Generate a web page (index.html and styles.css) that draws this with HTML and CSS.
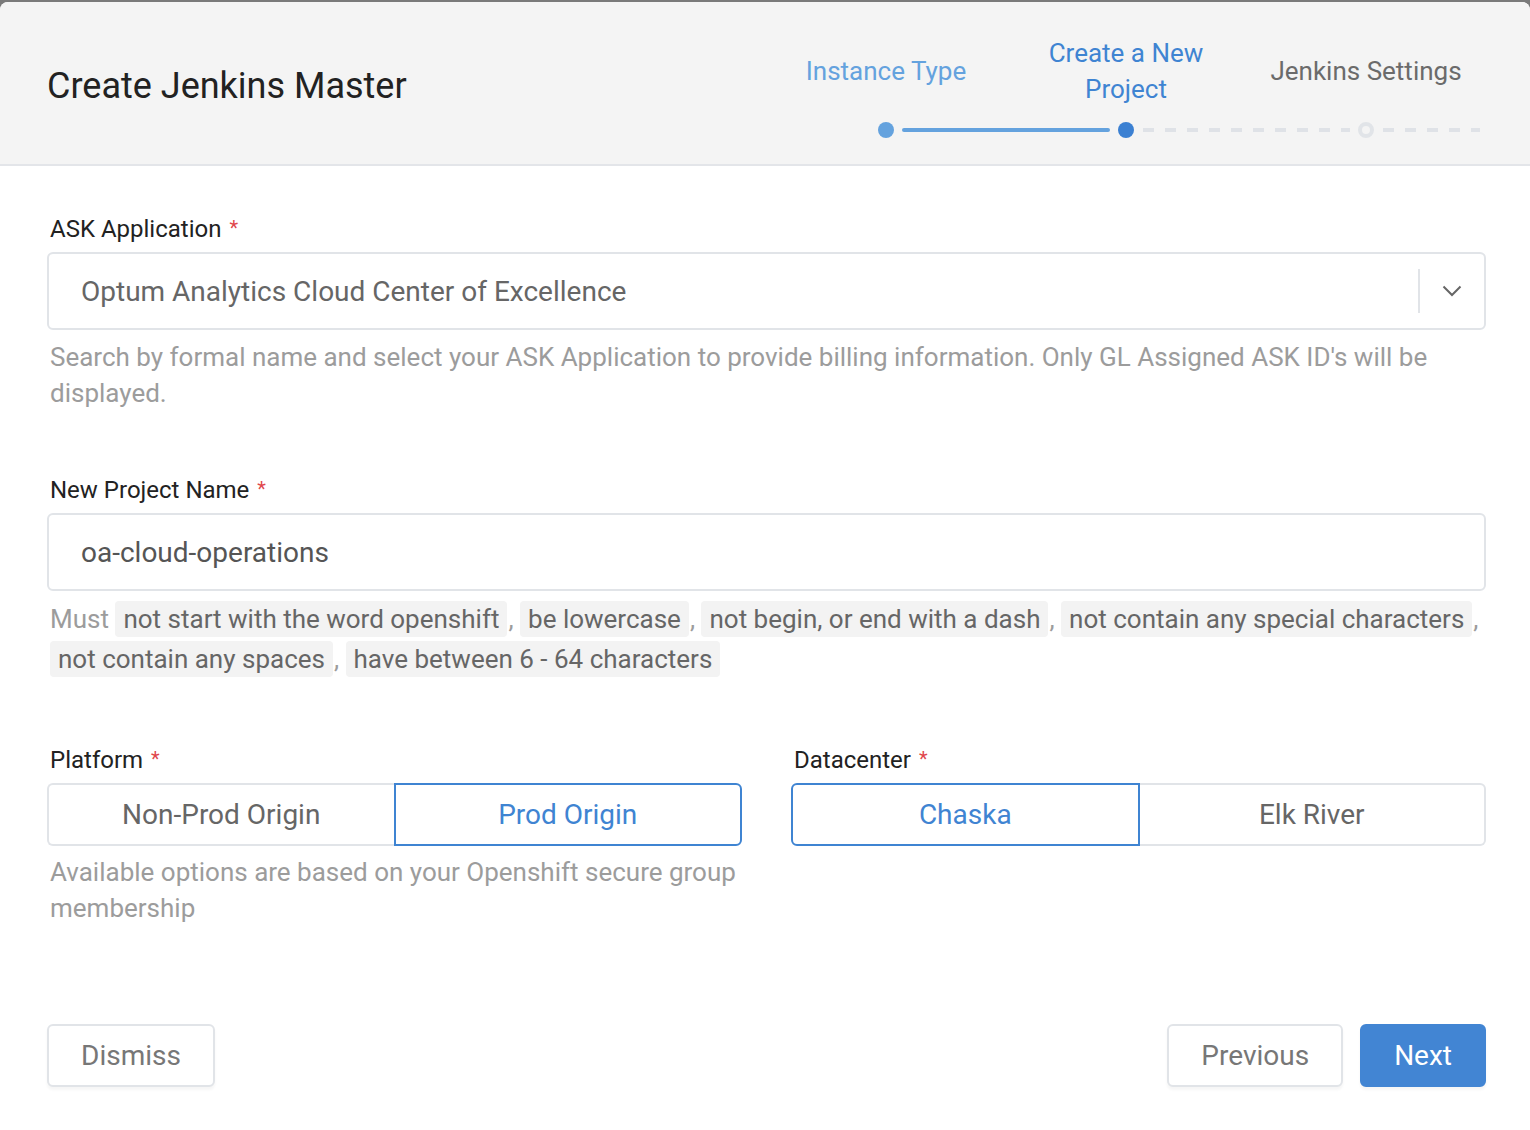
FILE: index.html
```html
<!DOCTYPE html>
<html lang="en">
<head>
<meta charset="utf-8">
<title>Create Jenkins Master</title>
<link rel="stylesheet" href="styles.css">
</head>
<body>
<div class="modal">
  <header class="modal-header">
    <h1 class="title">Create Jenkins Master</h1>
    <div class="stepper">
      <div class="step-labels">
        <div class="step-label done">Instance Type</div>
        <div class="step-label active">Create a New<br>Project</div>
        <div class="step-label todo">Jenkins Settings</div>
      </div>
      <div class="step-track">
        <span class="dot dot-done"></span>
        <span class="line line-done"></span>
        <span class="dot dot-active"></span>
        <span class="line line-todo"></span>
        <span class="dot dot-todo"></span>
        <span class="line line-todo line-tail"></span>
      </div>
    </div>
  </header>

  <main class="modal-body">
    <section class="field">
      <label class="label">ASK Application <span class="req">*</span></label>
      <div class="select">
        <span class="select-value">Optum Analytics Cloud Center of Excellence</span>
        <span class="select-sep"></span>
        <span class="select-arrow">
          <svg width="20" height="12" viewBox="0 0 20 12"><path d="M1.5 1.5 L10 10 L18.5 1.5" fill="none" stroke="#666" stroke-width="2"/></svg>
        </span>
      </div>
      <p class="help">Search by formal name and select your ASK Application to provide billing information. Only GL Assigned ASK ID's will be displayed.</p>
    </section>

    <section class="field field-project">
      <label class="label">New Project Name <span class="req">*</span></label>
      <div class="input">oa-cloud-operations</div>
      <p class="rules">
        <span class="must">Must</span>
        <span class="chip">not start with the word openshift</span><span class="comma">,</span>
        <span class="chip">be lowercase</span><span class="comma">,</span>
        <span class="chip">not begin, or end with a dash</span><span class="comma">,</span>
        <span class="chip">not contain any special characters</span><span class="comma">,</span>
        <span class="chip">not contain any spaces</span><span class="comma">,</span>
        <span class="chip">have between 6 - 64 characters</span>
      </p>
    </section>

    <section class="field-row">
      <div class="field-col">
        <label class="label">Platform <span class="req">*</span></label>
        <div class="segmented">
          <button class="seg">Non-Prod Origin</button>
          <button class="seg seg-on">Prod Origin</button>
        </div>
        <p class="help help-seg">Available options are based on your Openshift secure group membership</p>
      </div>
      <div class="field-col">
        <label class="label">Datacenter <span class="req">*</span></label>
        <div class="segmented">
          <button class="seg seg-on">Chaska</button>
          <button class="seg">Elk River</button>
        </div>
      </div>
    </section>
  </main>

  <footer class="modal-footer">
    <button class="btn">Dismiss</button>
    <div class="footer-right">
      <button class="btn">Previous</button>
      <button class="btn btn-primary">Next</button>
    </div>
  </footer>
</div>
</body>
</html>
```

FILE: styles.css
```css
html {
  background: #7a7a7a;
}
body {
  margin: 0;
  padding-top: 2px;
  font-family: Roboto, "Liberation Sans", sans-serif;
}
.modal {
  background: #fff;
  border-radius: 8px 8px 0 0;
  min-height: 1128px;
  overflow: hidden;
}
.modal-header {
  height: 164px;
  box-sizing: border-box;
  background: #f4f4f4;
  border-bottom: 2px solid #e3e5e9;
  display: flex;
  justify-content: space-between;
  padding: 0 44px 0 47px;
}
.title {
  margin: 0;
  align-self: center;
  font-size: 36px;
  font-weight: 400;
  color: #222;
  margin-top: 6px;
}
.stepper {
  width: 720px;
  padding-top: 33px;
}
.step-labels {
  display: flex;
}
.step-label {
  width: 240px;
  height: 72px;
  display: flex;
  align-items: center;
  justify-content: center;
  text-align: center;
  font-size: 26px;
  line-height: 36px;
}
.step-label.done { color: #64a2de; }
.step-label.active { color: #3f84d2; }
.step-label.todo { color: #6b6b6b; }
.step-track {
  display: flex;
  align-items: center;
  height: 16px;
  margin-top: 15px;
  padding-left: 112px;
}
.dot {
  width: 16px;
  height: 16px;
  border-radius: 50%;
  box-sizing: border-box;
  flex: none;
}
.dot-done { background: #64a2de; }
.dot-active { background: #3b80d2; }
.dot-todo { border: 4px solid #e1e4e8; background: #f4f4f4; }
.line {
  height: 4px;
  width: 208px;
  margin: 0 8px;
  flex: none;
}
.line-done {
  background: #64a2de;
  border-radius: 2px;
}
.line-todo {
  margin-left: 9px;
  width: 207px;
  background: repeating-linear-gradient(to right, #dfe2e7 0 11px, transparent 11px 22px);
}
.line-tail {
  width: 97px;
}

.modal-body {
  padding: 47px 44px 0 47px;
}
.label {
  display: block;
  font-size: 24px;
  line-height: 30px;
  color: #222;
  padding-left: 3px;
  margin-bottom: 8px;
}
.req {
  color: #e0474c;
  font-size: 20px;
  margin-left: 2px;
  vertical-align: 2px;
}
.select, .input {
  height: 78px;
  box-sizing: border-box;
  border: 2px solid #e1e4e8;
  border-radius: 6px;
  display: flex;
  align-items: center;
  font-size: 28px;
  color: #666;
  padding-left: 32px;
}
.input { color: #555; }
.select-value { flex: 1; }
.select-sep {
  width: 2px;
  height: 44px;
  background: #e1e4e8;
}
.select-arrow {
  width: 64px;
  display: flex;
  justify-content: center;
  align-items: center;
}
.help {
  margin: 9px 0 0;
  padding-left: 3px;
  font-size: 26px;
  line-height: 36px;
  color: #9c9c9c;
}
.help-seg {
  margin-top: 8px;
}
.field-project {
  margin-top: 63px;
}
.rules {
  margin: 8px 0 0;
  font-size: 26px;
  line-height: 40px;
  color: #9c9c9c;
  padding-left: 3px;
}
.must { margin-right: 0; }
.chip {
  background: #f3f3f3;
  color: #666;
  border-radius: 4px;
  padding: 3px 8px;
}
.comma { margin: 0 0 0 1px; }

.field-row {
  margin-top: 65px;
  display: grid;
  grid-template-columns: 1fr 1fr;
  column-gap: 49px;
}
.segmented {
  display: flex;
  height: 63px;
}
.seg {
  flex: 1;
  font-family: inherit;
  font-size: 28px;
  color: #666;
  background: #fff;
  border: 2px solid #e1e4e8;
  margin: 0;
  padding: 0;
}
.seg:first-child { border-radius: 6px 0 0 6px; border-right: none; }
.seg:last-child { border-radius: 0 6px 6px 0; border-left: none; }
.seg.seg-on {
  color: #3f84d2;
  border: 2px solid #3f84d2;
}

.modal-footer {
  display: flex;
  justify-content: space-between;
  padding: 98px 44px 0 47px;
}
.footer-right {
  display: flex;
  gap: 17px;
}
.btn {
  height: 63px;
  padding: 0 32px;
  font-family: inherit;
  font-size: 28px;
  color: #777;
  background: #fff;
  border: 2px solid #e1e4e8;
  border-radius: 6px;
  box-shadow: 0 3px 3px rgba(0,0,0,0.04);
}
.btn-primary {
  background: #4285d3;
  border-color: #4285d3;
  color: #fff;
  padding: 0 32px;
}
```
